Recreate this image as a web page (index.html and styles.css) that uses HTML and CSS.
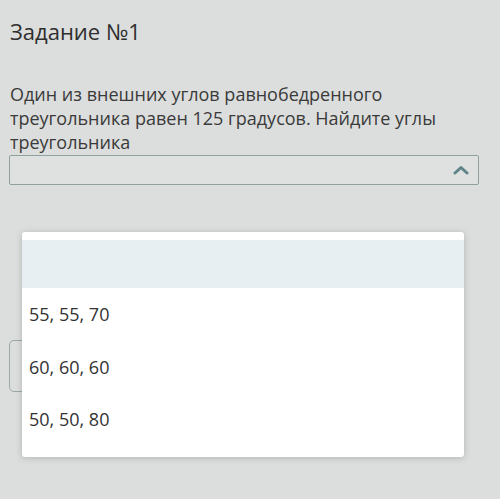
FILE: index.html
```html
<!DOCTYPE html>
<html lang="ru">
<head>
<meta charset="utf-8">
<link rel="stylesheet" href="styles.css">
</head>
<body>
<main class="page">
  <h2 class="title">Задание №1</h2>
  <p class="question">Один из внешних углов равнобедренного треугольника равен 125 градусов. Найдите углы треугольника</p>
  <div class="select">
    <svg class="chevron" width="16" height="10" viewBox="0 0 16 10"><path d="M2 8 L8 2.5 L14 8" fill="none" stroke="#5d8587" stroke-width="3" stroke-linecap="round" stroke-linejoin="round"/></svg>
  </div>
  <div class="button-box"></div>
  <ul class="dropdown">
    <li class="option empty"></li>
    <li class="option">55, 55, 70</li>
    <li class="option">60, 60, 60</li>
    <li class="option">50, 50, 80</li>
  </ul>
</main>
</body>
</html>
```

FILE: styles.css
```css
html, body {
  margin: 0;
  padding: 0;
  background: #dcdedd;
}
body {
  width: 500px;
  height: 499px;
  overflow: hidden;
  font-family: "Open Sans", "Liberation Sans", sans-serif;
  color: #333;
}
.page {
  position: relative;
  padding: 16px 21px 0 9px;
}
.title {
  margin: 0 0 0 1px;
  font-size: 22px;
  line-height: 30px;
  font-weight: 400;
  color: #2e2e2e;
}
.question {
  margin: 36px 0 0 1px;
  font-size: 18px;
  line-height: 24px;
  color: #3a3a3a;
}
.select {
  margin-top: 1px;
  height: 28px;
  border: 1px solid #8fa19f;
  border-radius: 2px;
  background: #dfe1e0;
  display: flex;
  align-items: center;
  justify-content: flex-end;
  padding-right: 9px;
}
.button-box {
  margin-top: 155px;
  width: 160px;
  height: 50px;
  border: 1px solid #9aa8a6;
  border-radius: 5px;
}
.dropdown {
  position: absolute;
  left: 22px;
  top: 232px;
  width: 442px;
  height: 217px;
  margin: 0;
  padding: 8px 0 0;
  list-style: none;
  background: #fff;
  border-radius: 3px;
  box-shadow: 0 1px 6px rgba(90, 105, 105, 0.35);
}
.option {
  height: 52.5px;
  display: flex;
  align-items: center;
  padding-left: 7px;
  font-size: 18px;
  line-height: 24px;
  color: #333;
}
.option.empty {
  height: 48px;
  background: #e7eff2;
}
```
